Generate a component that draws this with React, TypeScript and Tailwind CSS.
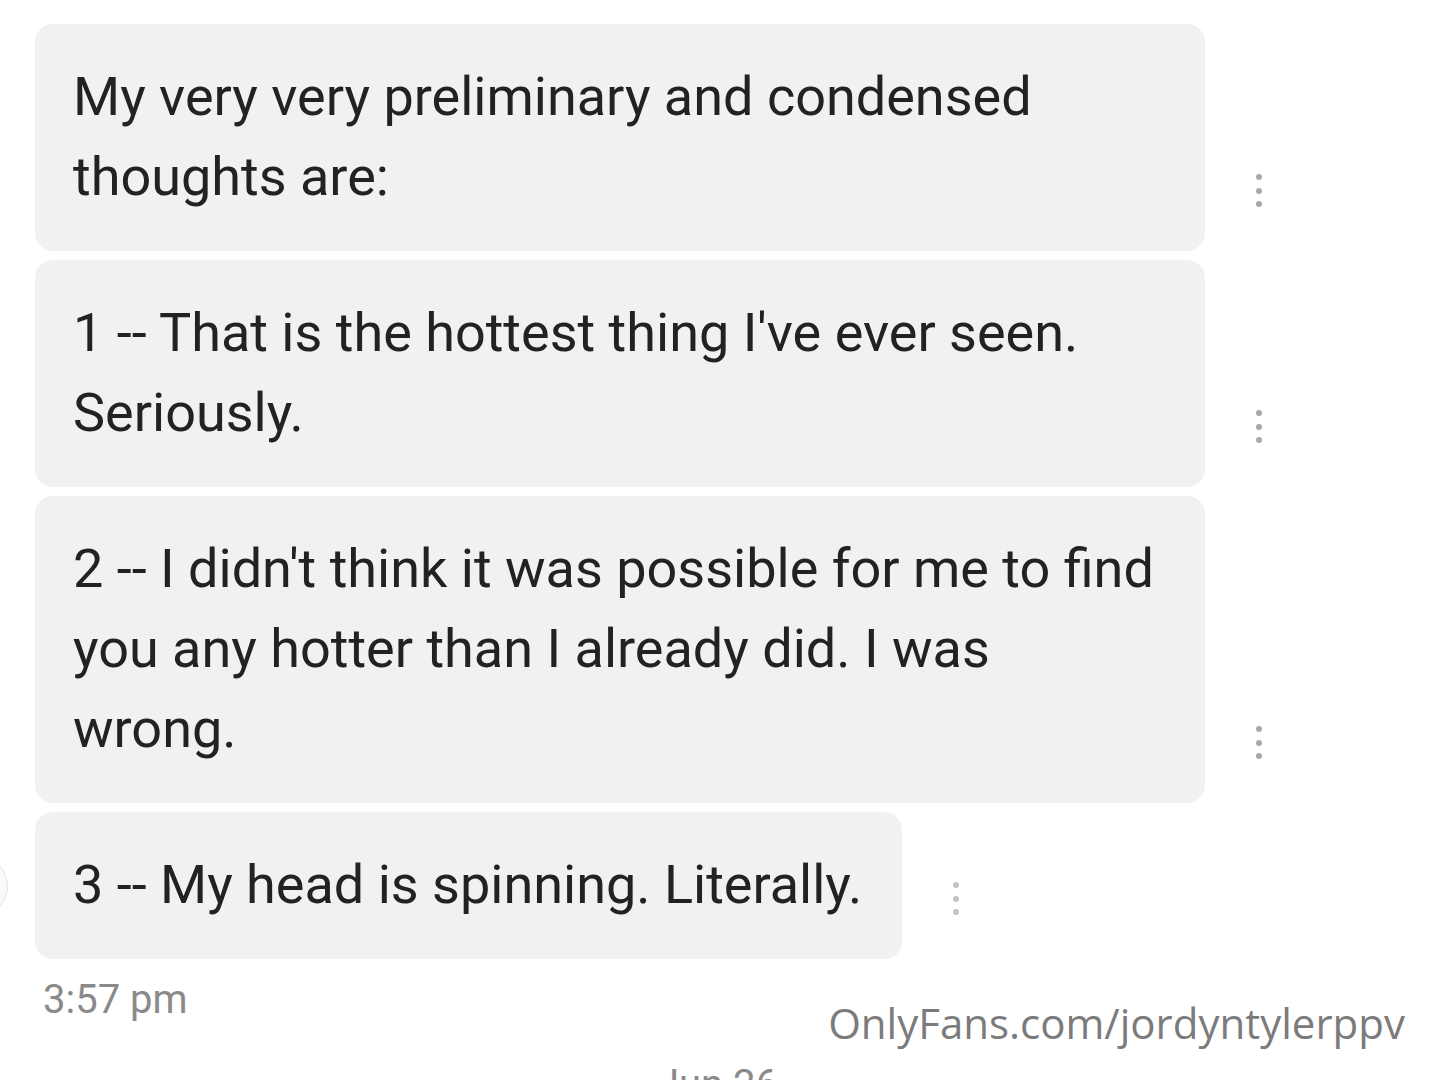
const messages = [
  { text: "My very very preliminary and condensed thoughts are:", wide: true },
  { text: "1 -- That is the hottest thing I've ever seen. Seriously.", wide: true },
  { text: "2 -- I didn't think it was possible for me to find you any hotter than I already did. I was wrong.", wide: true },
  { text: "3 -- My head is spinning. Literally.", wide: false },
]

const MoreDots = ({ faint }: { faint: boolean }) => (
  <div className="flex flex-col items-center gap-[7.5px] w-[20px] mb-[44px] ml-[44px] shrink-0">
    <span className={`${faint ? "bg-[#c4c4c4]" : "bg-[#a9a9a9]"} w-[6px] h-[6px] rounded-full`} />
    <span className={`${faint ? "bg-[#c4c4c4]" : "bg-[#a9a9a9]"} w-[6px] h-[6px] rounded-full`} />
    <span className={`${faint ? "bg-[#c4c4c4]" : "bg-[#a9a9a9]"} w-[6px] h-[6px] rounded-full`} />
  </div>
)

export default function App() {
  return (
    <div className="relative w-[1435px] h-[1080px] bg-white overflow-hidden font-['Roboto',sans-serif]">
      <div className="flex flex-col gap-[9px] pt-[24px]">
        {messages.map((m, i) => (
          <div key={i} className="flex flex-row items-end">
            <div className="w-[35px] shrink-0 flex items-center self-center">
              {i === messages.length - 1 && (
                <div className="w-[60px] h-[60px] -ml-[52px] rounded-full border border-[#e4e4e4] bg-[#fafafa]" />
              )}
            </div>
            <div
              className={`${m.wide ? "w-[1170px] pr-[47px]" : "pr-[40px]"} rounded-[18px] bg-[#f0f1f3] pl-[38px] pt-[33px] pb-[34px] text-[#222222] text-[54px] leading-[80px]`}
            >
              {m.text}
            </div>
            <MoreDots faint={!m.wide} />
          </div>
        ))}
      </div>
      <div className="flex flex-row items-start justify-between pl-[43px] pr-[30px]">
        <span className="text-[40px] leading-[50px] text-[#8a8a8a] mt-[16px]">3:57 pm</span>
        <span className="font-['Open_Sans',sans-serif] text-[42px] leading-[50px] text-[#7b7b7b] mt-[39px]">
          OnlyFans.com/jordyntylerppv
        </span>
      </div>
      <div className="flex justify-center">
        <span className="text-[40px] leading-[50px] text-[#8a8a8a] mt-[12px]">Jun 26</span>
      </div>
    </div>
  )
}
